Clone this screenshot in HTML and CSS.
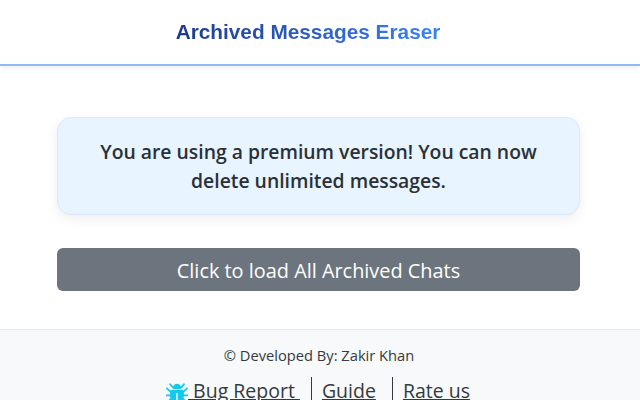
FILE: index.html
```html
<!DOCTYPE html>
<html lang="en">
<head>
<meta charset="utf-8">
<title>Archived Messages Eraser</title>
<link rel="stylesheet" href="styles.css">
</head>
<body>
<header class="header">
  <h1 class="title">Archived Messages Eraser</h1>
</header>
<main class="main">
  <div class="notice">You are using a premium version! You can now delete unlimited messages.</div>
  <button class="load" type="button">Click to load All Archived Chats</button>
</main>
<footer class="footer">
  <p class="credit">© Developed By: Zakir Khan</p>
  <nav class="links">
    <a class="link link-first" href="#"><svg class="bug" viewBox="0 0 24 24" aria-hidden="true"><path d="M7.500 6.500a4.500 4.500 0 0 1 9 0c0 .6-.4 1-1 1h-7c-.6 0-1-.4-1-1z"/><path d="M7 8.500h10c1.500 0 2.500 1 2.500 2.500v4c0 4-3 7-6.700 7.300V12h-1.600v10.300C7.500 22 4.500 19 4.500 15v-4c0-1.500 1-2.500 2.500-2.500z"/><path class="leg" d="M4.500 2.500 7.500 6M19.500 2.500 16.500 6M1 7l4 3.500M23 7l-4 3.500M.5 14.500h4.500M23.500 14.500H19M1.500 22 6 18M22.500 22 18 18"/></svg> Bug Report&nbsp;</a>
    <a class="link" href="#">Guide</a>
    <a class="link link-last" href="#">Rate us</a>
  </nav>
</footer>
</body>
</html>
```
FILE: styles.css
```css
* { box-sizing: border-box; }
html, body { height: 100%; }
body {
  margin: 0;
  height: 400px;
  overflow: hidden;
  background: #fff;
  color: #212529;
  font-family: "Open Sans", "Noto Sans", sans-serif;
  display: flex;
  flex-direction: column;
}
.header {
  height: 66px;
  flex: none;
  border-bottom: 2px solid #93b9f5;
  box-shadow: 0 2px 5px rgba(0, 0, 0, .06);
  display: flex;
  align-items: center;
  justify-content: center;
  padding: 0 24px 0 0;
}
.title {
  margin: 0;
  font: 700 20.800px "Liberation Sans", Arial, sans-serif;
  background: linear-gradient(90deg, #1e3a8a, #3b82f6);
  -webkit-background-clip: text;
  background-clip: text;
  color: transparent;
}
.main {
  flex: 1;
  padding: 51px 60px 0 57px;
  display: flex;
  flex-direction: column;
  gap: 33px;
}
.notice {
  height: 98px;
  background: #e8f4ff;
  border: 1px solid #dbe7fb;
  border-radius: 14px;
  box-shadow: 0 4px 12px rgba(0, 0, 0, .07);
  display: flex;
  align-items: center;
  justify-content: center;
  text-align: center;
  padding: 0 36px;
  font-size: 19.350px;
  font-weight: 600;
  line-height: 29px;
  color: #2a3038;
}
.load {
  height: 43px;
  background: #6c757d;
  border: 0;
  border-radius: 6px;
  padding: 2px 0 0;
  color: #fff;
  font-family: inherit;
  font-size: 19.900px;
}
.footer {
  flex: none;
  height: 71px;
  background: #f8f9fa;
  border-top: 1px solid #e6e7e9;
  padding: 16px 2px 0 0;
  text-align: center;
  overflow: hidden;
}
.credit {
  margin: 0 0 12px;
  font-size: 14.700px;
  line-height: 19px;
  color: #343a40;
}
.links {
  display: flex;
  justify-content: center;
  font-size: 19.500px;
  line-height: 27px;
}
.link {
  color: #343a40;
  text-decoration: underline;
  padding: 0 16px 0 10px;
  border-left: 1px solid #343a40;
}
.link-first { border-left: 0; padding-left: 0; padding-right: 11px; }
.link-last { padding-right: 2px; }
.bug { width: 22px; height: 22px; vertical-align: -6px; fill: #14c8ee; }
.leg { fill: none; stroke: #14c8ee; stroke-width: 2; stroke-linecap: round; }
```
